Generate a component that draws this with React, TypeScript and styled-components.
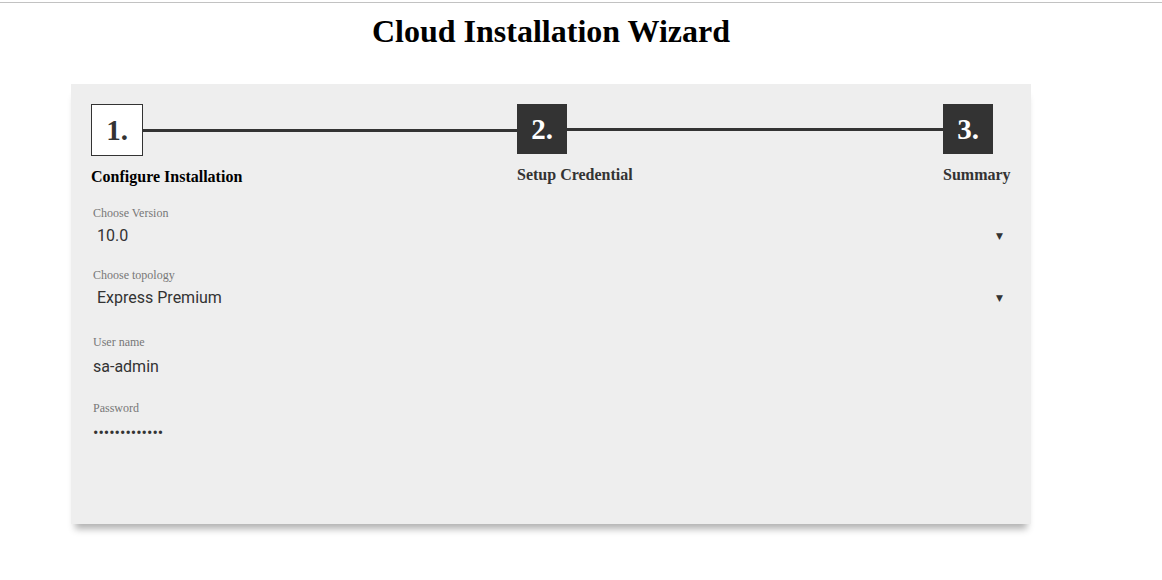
import React from "react";
import styled, { createGlobalStyle } from "styled-components";

const Global = createGlobalStyle`
  html, body { margin: 0; padding: 0; background: #fff; }
  body { font-family: "Liberation Serif", "Times New Roman", serif; }
  * { box-sizing: border-box; }
`;

const Page = styled.div`
  padding: 2px 0 40px;
  min-height: 580px;
`;

const TopRule = styled.div`
  height: 1px;
  background: #c2c2c2;
`;

const Wrapper = styled.div`
  width: 960px;
  margin-left: 71px;
`;

const Title = styled.h1`
  margin: 10px 0 34px;
  font-family: "Liberation Serif", "Times New Roman", serif;
  font-size: 32px;
  line-height: 37px;
  font-weight: 700;
  text-align: center;
  color: #000;
`;

const Card = styled.div`
  height: 440px;
  background: #eeeeee;
  padding: 20px 20px;
  box-shadow: 0 9px 7px -4px rgba(0, 0, 0, 0.3);
`;

const Stepper = styled.div`
  display: grid;
  grid-template-columns: 426px 426px auto;
  align-items: start;
`;

const Step = styled.div`
  display: flex;
  flex-direction: column;
`;

const StepHead = styled.div`
  display: flex;
  align-items: center;
`;

const StepBox = styled.div<{ $active?: boolean }>`
  width: ${(p) => (p.$active ? 52 : 50)}px;
  height: ${(p) => (p.$active ? 52 : 50)}px;
  flex: none;
  display: flex;
  align-items: center;
  justify-content: center;
  background: ${(p) => (p.$active ? "#fff" : "#333")};
  border: ${(p) => (p.$active ? "1px solid #333" : "none")};
  color: ${(p) => (p.$active ? "#333" : "#fff")};
  font-family: "Liberation Serif", "Times New Roman", serif;
  font-weight: 700;
  font-size: 29px;
  line-height: 1;
`;

const Connector = styled.div`
  flex: 1;
  height: 3px;
  background: #333;
`;

const StepLabel = styled.div<{ $active?: boolean }>`
  margin-top: 11px;
  font-family: "Liberation Serif", "Times New Roman", serif;
  font-weight: 700;
  font-size: 16px;
  line-height: 19px;
  white-space: nowrap;
  color: ${(p) => (p.$active ? "#000" : "#333")};
`;

const Form = styled.div`
  margin-top: 20px;
  padding-left: 2px;
  display: flex;
  flex-direction: column;
`;

const Field = styled.div<{ $top: number }>`
  margin-top: ${(p) => p.$top}px;
  display: flex;
  flex-direction: column;
`;

const FieldLabel = styled.label`
  font-family: "Liberation Serif", "Times New Roman", serif;
  font-size: 12px;
  line-height: 14px;
  color: #777;
`;

const SelectBox = styled.div`
  margin-top: 5px;
  height: 20px;
  display: flex;
  align-items: center;
  justify-content: space-between;
  padding: 0 8px 0 4px;
  font-family: Roboto, "Liberation Sans", sans-serif;
  font-size: 16px;
  color: #333;
`;

const Arrow = styled.span`
  font-size: 9px;
  color: #333;
  font-family: "DejaVu Sans", sans-serif;
  padding-top: 1px;
`;

const TextInput = styled.input`
  margin-top: 7px;
  height: 20px;
  width: 100%;
  padding: 0;
  border: none;
  outline: none;
  background: transparent;
  font-family: Roboto, "Liberation Sans", sans-serif;
  font-size: 16px;
  color: #333;
`;

const steps = [
  { n: "1.", label: "Configure Installation", active: true },
  { n: "2.", label: "Setup Credential" },
  { n: "3.", label: "Summary" },
];

export default function App() {
  return (
    <Page>
      <Global />
      <TopRule />
      <Wrapper>
        <Title>Cloud Installation Wizard</Title>
        <Card>
          <Stepper>
            {steps.map((s, i) => (
              <Step key={s.n}>
                <StepHead>
                  <StepBox $active={s.active}>{s.n}</StepBox>
                  {i < steps.length - 1 && <Connector />}
                </StepHead>
                <StepLabel $active={s.active}>{s.label}</StepLabel>
              </Step>
            ))}
          </Stepper>
          <Form>
            <Field $top={0}>
              <FieldLabel>Choose Version</FieldLabel>
              <SelectBox>
                <span>10.0</span>
                <Arrow>▼</Arrow>
              </SelectBox>
            </Field>
            <Field $top={23}>
              <FieldLabel>Choose topology</FieldLabel>
              <SelectBox>
                <span>Express Premium</span>
                <Arrow>▼</Arrow>
              </SelectBox>
            </Field>
            <Field $top={28}>
              <FieldLabel>User name</FieldLabel>
              <TextInput type="text" value="sa-admin" readOnly />
            </Field>
            <Field $top={25}>
              <FieldLabel>Password</FieldLabel>
              <TextInput type="password" value="1234567890123" readOnly />
            </Field>
          </Form>
        </Card>
      </Wrapper>
    </Page>
  );
}
